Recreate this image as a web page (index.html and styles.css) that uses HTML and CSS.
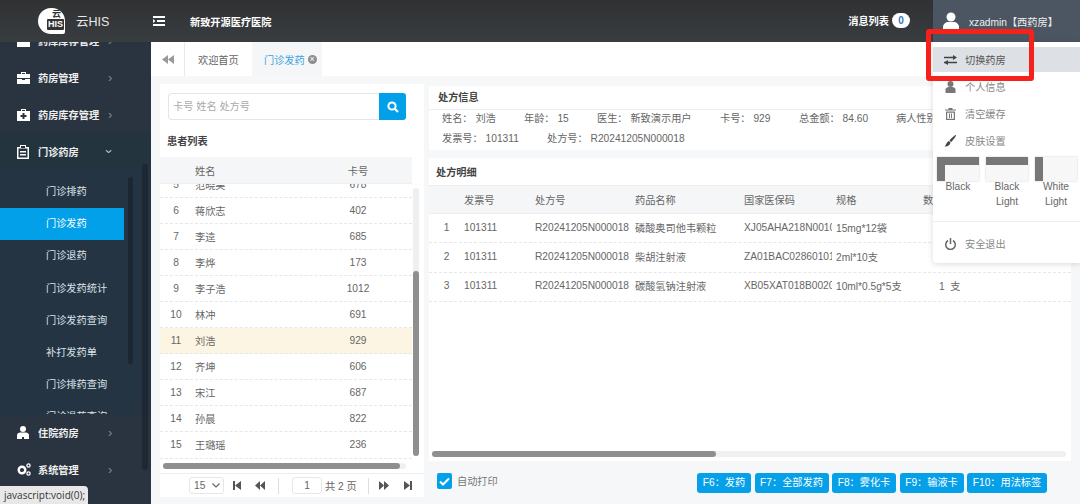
FILE: index.html
```html
<!DOCTYPE html>
<html lang="zh-CN">
<head>
<meta charset="utf-8">
<title>云HIS</title>
<link rel="stylesheet" href="styles.css">
</head>
<body>
<header class="topbar">
  <div class="logo">
    <div class="logo-mark"><span class="logo-yun">云</span><span class="logo-his">HIS</span></div>
    <span class="logo-name">云HIS</span>
  </div>
  <svg class="menu-toggle" width="12" height="10" viewBox="0 0 12 10"><path d="M0 0h12v2H0zM4 4h8v2H4zM0 8h12v2H0zM0 3l2.500 2L0 7z" fill="#fff"/></svg>
  <strong class="hospital">新致开源医疗医院</strong>
  <div class="msg"><strong>消息列表</strong><span class="badge">0</span></div>
  <div class="user">
    <svg width="16" height="18" viewBox="0 0 16 18"><circle cx="8" cy="5" r="4.500" fill="#fff"/><path d="M0 18v-3c0-3 3-5 5-5h6c2 0 5 2 5 5v3z" fill="#fff"/></svg>
    <span>xzadmin【西药房】</span>
  </div>
</header>

<div class="body-row">
  <aside class="sidebar">
    <div class="nav-item nav-first">
      <svg class="nav-icon" width="13" height="12" viewBox="0 0 13 12"><path d="M0 2h13v10H0zM4 0h5v2H4z" fill="#fff"/></svg>
      <b>药库库存管理</b><i class="chev">›</i>
    </div>
    <div class="nav-item">
      <svg class="nav-icon" width="13" height="12" viewBox="0 0 13 12"><path d="M4 2V0h5v2h4v4H0V2zM5 1v1h3V1zM0 7h5v1h3V7h5v5H0z" fill="#fff" fill-rule="evenodd"/></svg>
      <b>药房管理</b><i class="chev">›</i>
    </div>
    <div class="nav-item">
      <svg class="nav-icon" width="13" height="12" viewBox="0 0 13 12"><path d="M4 2V0h5v2h4v10H0V2zM5 1v1h3V1zM5.500 4v2h-2v2h2v2h2V8h2V6h-2V4z" fill="#fff" fill-rule="evenodd"/></svg>
      <b>药房库存管理</b><i class="chev">›</i>
    </div>
    <div class="nav-item nav-open">
      <svg class="nav-icon" width="12" height="14" viewBox="0 0 12 14"><path d="M3 0h6v2h3v12H0V2h3zM1.500 3.500v9h9v-9zM4 1v2h4V1zM3 6h6v1.500H3zM3 9h6v1.500H3z" fill="#fff" fill-rule="evenodd"/></svg>
      <b>门诊药房</b><i class="chev chev-down">›</i>
    </div>
    <div class="subnav">
      <a>门诊排药</a>
      <a class="active">门诊发药</a>
      <a>门诊退药</a>
      <a>门诊发药统计</a>
      <a>门诊发药查询</a>
      <a>补打发药单</a>
      <a>门诊排药查询</a>
      <a>门诊退药查询</a>
      <span class="sub-scroll"></span>
    </div>
    <div class="nav-item">
      <svg class="nav-icon" width="12" height="13" viewBox="0 0 12 13"><circle cx="6" cy="3" r="3" fill="#fff"/><path d="M0 13V9c0-1.500 2-2.500 3-2.500h6c1 0 3 1 3 2.500v4H7v-2H5v2z" fill="#fff"/></svg>
      <b>住院药房</b><i class="chev">›</i>
    </div>
    <div class="nav-item">
      <svg class="nav-icon" width="14" height="13" viewBox="0 0 14 13"><circle cx="5" cy="7" r="3.300" fill="none" stroke="#fff" stroke-width="2.400"/><circle cx="11.500" cy="2.500" r="1.600" fill="none" stroke="#fff" stroke-width="1.300"/><circle cx="11.500" cy="10.500" r="1.600" fill="none" stroke="#fff" stroke-width="1.300"/></svg>
      <b>系统管理</b><i class="chev">›</i>
    </div>
    <span class="side-scroll"></span>
  </aside>

  <main class="main">
    <nav class="tabs">
      <span class="tab-back"><svg width="12" height="9" viewBox="0 0 12 9"><path d="M6 0v9L0 4.500zM12 0v9L6 4.500z" fill="#999"/></svg></span>
      <span class="tab">欢迎首页</span>
      <span class="tab tab-on">门诊发药<span class="tab-x">×</span></span>
    </nav>

    <div class="content">
      <section class="left-panel">
        <div class="search">
          <span class="search-input">卡号 姓名 处方号</span>
          <span class="search-btn"><svg width="12" height="12" viewBox="0 0 12 12"><circle cx="5" cy="5" r="3.600" fill="none" stroke="#fff" stroke-width="2"/><path d="M7.800 7.800L11 11" stroke="#fff" stroke-width="2.200"/></svg></span>
        </div>
        <h3 class="patients-title">患者列表</h3>
        <div class="p-head"><span></span><span>姓名</span><span class="center">卡号</span></div>
        <div class="p-wrap">
          <div class="p-rows">
            <div class="p-row"><span class="center">5</span><span>范晓昊</span><span class="center">678</span></div>
            <div class="p-row"><span class="center">6</span><span>蒋欣志</span><span class="center">402</span></div>
            <div class="p-row"><span class="center">7</span><span>李逵</span><span class="center">685</span></div>
            <div class="p-row"><span class="center">8</span><span>李烨</span><span class="center">173</span></div>
            <div class="p-row"><span class="center">9</span><span>李子浩</span><span class="center">1012</span></div>
            <div class="p-row"><span class="center">10</span><span>林冲</span><span class="center">691</span></div>
            <div class="p-row p-row-on"><span class="center">11</span><span>刘浩</span><span class="center">929</span></div>
            <div class="p-row"><span class="center">12</span><span>齐坤</span><span class="center">606</span></div>
            <div class="p-row"><span class="center">13</span><span>宋江</span><span class="center">687</span></div>
            <div class="p-row"><span class="center">14</span><span>孙晨</span><span class="center">822</span></div>
            <div class="p-row"><span class="center">15</span><span>王璐瑶</span><span class="center">236</span></div>
          </div>
          <span class="v-track"><span class="v-thumb"></span></span>
        </div>
        <div class="h-track-left"><span class="h-thumb-left"></span></div>
        <div class="pager">
          <span class="page-size">15<svg width="8" height="5" viewBox="0 0 8 5"><path d="M.5.500L4 4 7.500.5" fill="none" stroke="#666" stroke-width="1.200"/></svg></span>
          <svg class="pg-first" width="8" height="9" viewBox="0 0 8 9"><path d="M0 0h2v9H0zM8 0v9L2 4.500z" fill="#555"/></svg>
          <svg class="pg-prev" width="10" height="9" viewBox="0 0 10 9"><path d="M5 0v9L0 4.500zM10 0v9L5 4.500z" fill="#555"/></svg>
          <i class="pg-sep"></i>
          <span class="page-input">1</span>
          <span class="page-total">共 2 页</span>
          <i class="pg-sep pg-sep2"></i>
          <svg class="pg-next" width="10" height="9" viewBox="0 0 10 9"><path d="M0 0v9l5-4.500zM5 0v9l5-4.500z" fill="#555"/></svg>
          <svg class="pg-last" width="8" height="9" viewBox="0 0 8 9"><path d="M8 0H6v9h2zM0 0v9l6-4.500z" fill="#555"/></svg>
        </div>
      </section>

      <section class="right-col">
        <div class="info-card">
          <h3 class="info-title">处方信息</h3>
          <div class="info-line">
            <span class="w-a">姓名： 刘浩</span><span class="w-b">年龄： 15</span><span class="w-c">医生： 新致演示用户</span><span class="w-d">卡号： 929</span><span class="w-e">总金额： 84.60</span><span>病人性别： 男</span>
          </div>
          <div class="info-line">
            <span class="w-f">发票号： 101311</span><span>处方号： R20241205N000018</span>
          </div>
        </div>
        <div class="detail-card">
          <h3 class="detail-title">处方明细</h3>
          <div class="d-row d-head"><span></span><span>发票号</span><span>处方号</span><span>药品名称</span><span>国家医保码</span><span>规格</span><span>数量</span></div>
          <div class="d-row"><span class="center">1</span><span>101311</span><span>R20241205N000018</span><span>磷酸奥司他韦颗粒</span><span>XJ05AHA218N0010</span><span>15mg*12袋</span><span class="qty">1&nbsp;&nbsp;盒</span></div>
          <div class="d-row"><span class="center">2</span><span>101311</span><span>R20241205N000018</span><span>柴胡注射液</span><span>ZA01BAC0286010101</span><span>2ml*10支</span><span class="qty">1&nbsp;&nbsp;支</span></div>
          <div class="d-row"><span class="center">3</span><span>101311</span><span>R20241205N000018</span><span>碳酸氢钠注射液</span><span>XB05XAT018B0020</span><span>10ml*0.5g*5支</span><span class="qty">1&nbsp;&nbsp;支</span></div>
          <div class="d-fill"></div>
          <div class="h-track-right"><span class="h-thumb-right"></span></div>
        </div>
        <div class="actions">
          <span class="check"><svg width="11" height="9" viewBox="0 0 11 9"><path d="M1 4.500L4 7.500 10 1.500" fill="none" stroke="#fff" stroke-width="2"/></svg></span>
          <span class="check-label">自动打印</span>
          <div class="btns">
            <span class="btn btn-f6">F6：发药</span>
            <span class="btn btn-f7">F7：全部发药</span>
            <span class="btn btn-f8">F8：雾化卡</span>
            <span class="btn btn-f9">F9：输液卡</span>
            <span class="btn btn-f10">F10：用法标签</span>
          </div>
        </div>
      </section>
    </div>
  </main>
</div>

<div class="dropdown">
  <div class="dd-item dd-on">
    <svg width="13" height="10" viewBox="0 0 13 10"><path d="M0 2.500h10M0 7.500h13" stroke="#444" stroke-width="1.400"/><path d="M9 0l4 2.500L9 5zM4 5L0 7.500 4 10z" fill="#444"/></svg>
    <span>切换药房</span>
  </div>
  <div class="dd-item">
    <svg width="12" height="12" viewBox="0 0 12 12"><circle cx="6" cy="3" r="3" fill="#777"/><path d="M1 12V8.500C1 7 3 6 4 6h4c1 0 3 1 3 2.500V12z" fill="#777"/></svg>
    <span>个人信息</span>
  </div>
  <div class="dd-item">
    <svg width="11" height="12" viewBox="0 0 11 12"><path d="M3.500 0h4v1.500H11v1H0v-1h3.500zM1 3.500h9V12H1zM2.200 4.700v6h6.600v-6zM4 5.500h1v4.500H4zM6 5.500h1v4.500H6z" fill="#777" fill-rule="evenodd"/></svg>
    <span>清空缓存</span>
  </div>
  <div class="dd-item">
    <svg width="12" height="12" viewBox="0 0 12 12"><path d="M11.500 0c.5.500-3 5.500-5 7L5 5.500C6.500 3.500 11 -.5 11.500 0zM4.500 6l1.500 1.500C5.500 10.500 2.500 12 0 11.500 2 10.500 1.500 7 4.500 6z" fill="#444"/></svg>
    <span>皮肤设置</span>
  </div>
  <div class="skins">
    <div class="skin"><i class="thumb thumb-top thumb-left"></i><span>Black</span></div>
    <div class="skin"><i class="thumb thumb-top"></i><span>Black Light</span></div>
    <div class="skin"><i class="thumb thumb-left"></i><span>White Light</span></div>
  </div>
  <div class="dd-item dd-logout">
    <svg width="12" height="12" viewBox="0 0 12 12"><path d="M3.500 2.500a4.800 4.800 0 1 0 5 0" fill="none" stroke="#666" stroke-width="1.500"/><path d="M6 0v6" stroke="#666" stroke-width="1.500"/></svg>
    <span>安全退出</span>
  </div>
</div>
<div class="red-box"></div>
<div class="status">javascript:void(0);</div>
</body>
</html>
```
FILE: styles.css
```css
* { box-sizing: border-box; }
html, body { margin: 0; padding: 0; }
body {
  width: 1080px;
  height: 504px;
  overflow: hidden;
  position: relative;
  display: flex;
  flex-direction: column;
  font-family: "Liberation Sans", "Noto Sans CJK SC", sans-serif;
  font-size: 10.200px;
  color: #666;
  background: #f6f7f8;
}
h3 { margin: 0; font-size: 10.200px; color: #444; font-weight: 700; }

i { font-style: normal; }

/* top bar */
.topbar {
  height: 42px;
  flex: none;
  display: flex;
  align-items: center;
  background: linear-gradient(#2f3133, #3a3d40);
  color: #fff;
  position: relative;
  z-index: 2;
}
.logo { width: 151px; padding-left: 38px; display: flex; align-items: center; gap: 11px; }
.logo-mark {
  width: 27px; height: 26px;
  background: #fff;
  border-radius: 13px 13px 2px 13px;
  position: relative;
  flex: none;
}
.logo-yun { position: absolute; left: 14px; top: 1px; font-size: 9px; line-height: 10px; font-weight: 700; color: #333; }
.logo-his { position: absolute; right: 1px; top: 11px; font-size: 9px; line-height: 11px; padding: 0 1px; background: #333; color: #fff; font-weight: 700; border-radius: 1px; }
.logo-name { font-size: 12.500px; color: #e8e8e8; margin-top: -2px; }
.menu-toggle { flex: none; margin-left: 2px; }
.hospital { margin-left: 25px; margin-top: 1px; }
.msg { margin-left: auto; display: flex; align-items: center; gap: 3px; margin-right: 23px; margin-top: -1px; }
.badge {
  width: 18px; height: 15px; border-radius: 8px;
  background: #fff; color: #3578b8; font-size: 10px; line-height: 15px; text-align: center; font-weight: 700;
}
.user {
  width: 147px; height: 42px; flex: none;
  background: #4c5562;
  display: flex; align-items: center; gap: 10px;
  padding-left: 10px;
  color: #eee;
}

.body-row { flex: 1; display: flex; min-height: 0; }

/* sidebar */
.sidebar {
  width: 151px; flex: none;
  background: #2a3440;
  color: #eee;
  position: relative;
  overflow: hidden;
}
.nav-item {
  height: 37px;
  display: flex;
  align-items: center;
  padding-left: 17px;
  position: relative;
}
.nav-item b { position: absolute; left: 38px; font-weight: 700; }
.nav-icon { flex: none; }
.nav-first { margin-top: -20px; }
.nav-open { background: #24343f; }
.chev { position: absolute; left: 108px; color: #7c8791; font-size: 13px; line-height: 13px; }
.chev-down { transform: rotate(90deg); color: #ccc; left: 107px; }
.subnav {
  height: 244px;
  background: #243443;
  overflow: hidden;
  position: relative;
  padding-top: 6px;
}
.subnav a {
  display: block;
  height: 32.200px;
  line-height: 32px;
  width: 124px;
  padding-left: 46px;
  color: #dde3e8;
}
.subnav a.active { background: #02a0e9; color: #fff; }
.sub-scroll { position: absolute; left: 128px; top: 7px; width: 5px; height: 187px; background: #1b2733; border-radius: 3px; }
.side-scroll { position: absolute; left: 142px; top: 122px; width: 6px; height: 306px; background: #1f2832; border-radius: 3px; }

/* main */
.main { flex: 1; min-width: 0; display: flex; flex-direction: column; }
.tabs { height: 34px; flex: none; background: #fff; display: flex; align-items: stretch; }
.tab-back { width: 34px; display: flex; align-items: center; justify-content: center; border-right: 1px solid #e8e9ea; }
.tab { display: flex; align-items: center; padding-left: 13px; width: 67px; white-space: nowrap; }
.tab-on { width: 70px; background: #f4f6f8; color: #3aa3e3; padding-left: 12px; }
.tab-x {
  width: 9px; height: 9px; border-radius: 50%; background: #8a8d90; color: #fff;
  font-size: 9px; line-height: 9px; text-align: center; margin-left: 3px; flex: none;
}
.content { flex: 1; display: flex; gap: 5px; padding: 8px 9px 7px 9px; min-height: 0; }

/* patient panel */
.left-panel { width: 264px; flex: none; background: #fff; padding-top: 9px; display: flex; flex-direction: column; }
.search { display: flex; height: 27px; margin: 0 18px 0 8px; flex: none; }
.search-input {
  flex: 1; border: 1px solid #e3e5e7; border-right: 0; border-radius: 4px 0 0 4px;
  line-height: 25px; padding-left: 4px; color: #aaa;
}
.search-btn { width: 27px; background: #02a0e9; border-radius: 0 3px 3px 0; display: flex; align-items: center; justify-content: center; }
.patients-title { margin: 14px 0 0 7px; line-height: 15px; height: 23px; flex: none; }
.p-head, .p-row { display: grid; grid-template-columns: 32px 118px 96px; align-items: center; }
.p-head { height: 27px; background: #f5f6f7; flex: none; width: 252px; border-bottom: 1px solid #eeeff0; position: relative; z-index: 1; }
.p-head span:nth-child(2), .p-row span:nth-child(2) { padding-left: 3px; }
.center { text-align: center; }
.p-wrap { height: 277px; position: relative; overflow: hidden; flex: none; }
.p-rows { width: 252px; margin-top: -12.500px; }
.p-row { height: 26.100px; border-bottom: 1px dashed #e6e7e8; }
.p-row-on { background: #fdf5e3; }
.v-track { position: absolute; left: 253px; top: 4px; width: 6px; height: 268px; border-radius: 3px; background: #efefef; }
.v-thumb { position: absolute; left: 0; right: 0; bottom: 0; height: 185px; border-radius: 3px; background: #8f8f8f; }
.h-track-left { height: 6px; margin: 2px 18px 0 3px; background: #f0f0f0; border-radius: 3px; flex: none; }
.h-thumb-left { display: block; width: 237px; height: 6px; background: #8f8f8f; border-radius: 3px; }
.pager {
  height: 24px; flex: none; margin-top: 4px;
  border-top: 1px solid #eee;
  display: flex; align-items: center; padding-left: 29px;
}
.page-size {
  width: 35px; height: 17px; border: 1px solid #e6e7e8; border-radius: 3px;
  display: flex; align-items: center; justify-content: space-between; padding: 0 3px 0 4px;
}
.pg-first { margin-left: 9px; }
.pg-prev { margin-left: 14px; }
.pg-sep { width: 1px; height: 16px; background: #ddd; margin-left: 13px; }
.page-input { width: 30px; height: 17px; border: 1px solid #e6e7e8; border-radius: 3px; text-align: center; line-height: 15px; margin-left: 13px; }
.page-total { margin-left: 3px; width: 43px; }
.pg-sep2 { margin-left: 0; }
.pg-next { margin-left: 10px; }
.pg-last { margin-left: 15px; }

/* right */
.right-col { width: 642px; flex: none; display: flex; flex-direction: column; gap: 8px; padding-top: 2px; }
.info-card { background: #fff; height: 64px; flex: none; }
.info-title { height: 24px; line-height: 24px; padding-left: 9px; border-bottom: 1px solid #eeeff0; }
.info-line { height: 20px; line-height: 18px; padding-left: 13px; display: flex; white-space: nowrap; overflow: hidden; }
.w-a { width: 82px; } .w-b { width: 73px; } .w-c { width: 123px; } .w-d { width: 79px; } .w-e { width: 97px; }
.w-f { width: 105px; }
.detail-card { background: #fff; height: 303px; flex: none; display: flex; flex-direction: column; }
.detail-title { height: 28px; line-height: 29px; padding-left: 7px; flex: none; border-bottom: 1px solid #eee; }
.d-row {
  display: grid;
  grid-template-columns: 35px 71px 100px 109px 92px 87px 60px;
  height: 29.400px; flex: none; align-items: center;
  border-bottom: 1px dashed #e6e7e8;
  padding-bottom: 2px;
}
.d-row span { overflow: hidden; white-space: nowrap; }
.d-row span:nth-child(5) { margin-right: 4px; }
.d-head { height: 28px; background: #f5f6f7; border-bottom: 1px solid #eeeff0; padding-bottom: 0; }
.d-row .qty { padding-left: 16px; }
.d-fill { flex: 1; }
.h-track-right { height: 6px; margin: 0 5px 4px 3px; background: #f0f0f0; border-radius: 3px; flex: none; }
.h-thumb-right { display: block; width: 284px; height: 6px; background: #8f8f8f; border-radius: 3px; }
.actions { display: flex; align-items: flex-start; padding-left: 8px; margin-top: 4px; }
.check { width: 15px; height: 16px; background: #02a0e9; border-radius: 2px; display: flex; align-items: center; justify-content: center; }
.check-label { margin-left: 5px; color: #777; line-height: 18px; }
.btns { margin-left: auto; margin-right: 24px; display: flex; gap: 3.500px; }
.btn {
  height: 20px; line-height: 19px; text-align: center; background: #06a0e8; color: #fff;
  border-radius: 3px; white-space: nowrap;
}
.btn-f6 { width: 54px; }
.btn-f7 { width: 74px; }
.btn-f8, .btn-f9 { width: 64px; }
.btn-f10 { width: 80px; }

/* dropdown */
.dropdown {
  position: absolute; left: 933px; top: 42px; width: 147px; height: 221px;
  background: #fff; border-radius: 0 0 0 4px;
  box-shadow: 0 1px 6px rgba(0,0,0,.15);
  padding-top: 5px; z-index: 3; color: #888;
}
.dd-item { height: 27px; display: flex; align-items: center; gap: 8px; padding-left: 11px; }
.dd-item svg { flex: none; width: 13px; }
.dd-on { height: 25px; background: #dde1e5; color: #555; margin-bottom: 1px; }
.skins { display: flex; gap: 7px; padding: 3px 3px 0 4px; height: 68px; border-bottom: 1px solid #eee; }
.skin { width: 42px; text-align: center; line-height: 15px; color: #666; }
.skin span { display: block; margin-top: -2px; }
.thumb { display: block; width: 42px; height: 24px; background: #f7f7f7; box-shadow: 0 0 2px rgba(0,0,0,.2); }
.thumb-top { border-top: 8px solid #777; }
.thumb-left { border-left: 8px solid #777; }
.dd-logout { margin-top: 8px; }
.red-box {
  position: absolute; left: 926px; top: 29px; width: 108px; height: 52px;
  border: 5px solid #f5211a; border-radius: 3px; z-index: 4;
}
.status {
  position: absolute; left: 0; bottom: 0; height: 18px; width: 88px;
  background: #e8e8e8; border-radius: 0 4px 0 0; color: #333;
  font-size: 10px; line-height: 18px; padding-left: 4px; z-index: 4;
  font-family: "Open Sans", "Liberation Sans", sans-serif; white-space: nowrap;
}
```
